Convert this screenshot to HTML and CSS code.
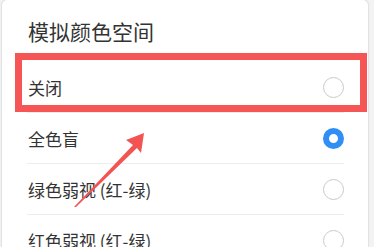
FILE: index.html
```html
<!DOCTYPE html>
<html>
  <head>
    <title>模拟颜色空间</title>
    <link rel="stylesheet" href="styles.css">
  </head>
  <body>
    <div class="card">
      <div class="title">模拟颜色空间</div>
      <div class="list">
        <div class="row">
          <span class="label">关闭</span>
          <span class="radio"></span>
        </div>
        <div class="row">
          <span class="label">全色盲</span>
          <span class="radio checked"></span>
        </div>
        <div class="row">
          <span class="label">绿色弱视 (红-绿)</span>
          <span class="radio"></span>
        </div>
        <div class="row">
          <span class="label">红色弱视 (红-绿)</span>
          <span class="radio"></span>
        </div>
      </div>
    </div>

    <!-- annotation overlay -->
    <div class="highlight"></div>
    <svg class="arrow" width="374" height="247" viewBox="0 0 374 247">
      <polygon points="144,133 126,140 133,145 74,207 76,207 137,148 141,153" fill="#f25454"/>
    </svg>
  </body>
</html>
```

FILE: styles.css
```css
html, body {
  margin: 0;
  padding: 0;
}

body {
  width: 374px;
  height: 247px;
  overflow: hidden;
  background-color: #f3f3f3;
  font-family: "Noto Sans CJK SC", "Noto Sans", sans-serif;
  position: relative;
}

.card {
  margin-left: 2px;
  width: 366px;
  height: 247px;
  overflow: hidden;
  background-color: #fff;
  border-radius: 5px 5px 0 0;
  box-shadow: 0 0 2px rgba(0, 0, 0, 0.25);
  padding-left: 25px;
  padding-right: 24px;
  box-sizing: border-box;
}

.title {
  height: 62px;
  line-height: 62px;
  font-size: 21px;
  color: #333;
  padding-left: 1px;
}

.row {
  height: 50px;
  display: flex;
  align-items: center;
  justify-content: space-between;
  border-bottom: 1px solid #ededed;
}

.label {
  font-size: 17px;
  color: #333;
  padding-left: 1px;
}

.radio {
  width: 21px;
  height: 21px;
  box-sizing: border-box;
  border: 1.5px solid #c9c9c9;
  border-radius: 50%;
}

.radio.checked {
  border: 6px solid #2f8ff5;
}

.highlight {
  position: absolute;
  left: 15px;
  top: 53px;
  width: 352px;
  height: 59px;
  box-sizing: border-box;
  border: 7px solid #f65555;
}

.arrow {
  position: absolute;
  left: 0;
  top: 0;
}
```
